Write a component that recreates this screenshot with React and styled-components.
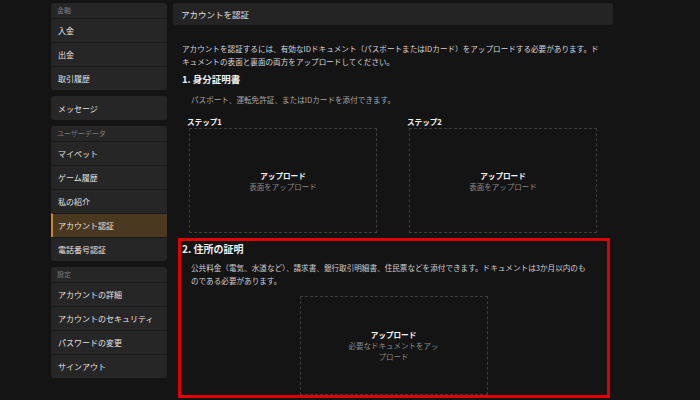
import React from "react";
import styled, { createGlobalStyle } from "styled-components";

const Global = createGlobalStyle`
  html, body { margin: 0; padding: 0; background: #141414; }
  body { font-family: "Noto Sans CJK JP", "Noto Sans", sans-serif; overflow: hidden; }
  * { box-sizing: border-box; }
`;

const Page = styled.div`
  display: flex;
  gap: 6px;
  padding: 3px 0 0 51px;
  height: 400px;
  overflow: hidden;
  background: #141414;
`;

const Sidebar = styled.nav`
  width: 116px;
  flex-shrink: 0;
  display: flex;
  flex-direction: column;
  gap: 6px;
`;

const Group = styled.div`
  background: #262626;
  border-radius: 3px;
  overflow: hidden;
  display: flex;
  flex-direction: column;
`;

const GroupTitle = styled.div`
  height: 15px;
  line-height: 15px;
  padding-left: 6px;
  font-size: 7px;
  color: #7c7c7c;
`;

const Item = styled.div`
  height: 24px;
  display: flex;
  align-items: center;
  padding-left: ${(p) => (p.$active ? "5px" : "7px")};
  border-top: 1px solid #1a1a1a;
  border-left: ${(p) => (p.$active ? "2px solid #c98a2e" : "none")};
  background: ${(p) => (p.$active ? "#4a3820" : "transparent")};
  font-size: 8px;
  color: #e4e4e4;
  ${(p) => p.$first && "border-top: none;"}
`;

const Main = styled.main`
  width: 440px;
  flex-shrink: 0;
  display: flex;
  flex-direction: column;
`;

const TitleBar = styled.div`
  height: 22px;
  background: #242424;
  border-radius: 3px;
  display: flex;
  align-items: center;
  padding-left: 8px;
  font-size: 8.5px;
  color: #e0e0e0;
`;

const Content = styled.div`
  padding: 0 3px 0 5px;
  display: flex;
  flex-direction: column;
`;

const Intro = styled.p`
  margin: 17px 0 0;
  padding: 0 5px 0 4px;
  font-size: 7.6px;
  line-height: 13px;
  color: #d6d6d6;
`;

const Heading = styled.h3`
  margin: ${(p) => p.$mt || "4px"} 0 0;
  padding-left: ${(p) => p.$pl || "4px"};
  font-size: ${(p) => p.$fs || "9.5px"};
  line-height: 14px;
  font-weight: 700;
  color: #f0f0f0;
`;

const Note = styled.p`
  margin: ${(p) => p.$mt || "7px"} 0 0;
  padding-left: ${(p) => p.$pl || "13px"};
  padding-right: ${(p) => p.$pr || "8px"};
  font-size: 7.6px;
  line-height: 13px;
  color: ${(p) => p.$color || "#a8a8a8"};
`;

const Steps = styled.div`
  display: grid;
  grid-template-columns: 188px 188px;
  column-gap: 32px;
  margin: 11px 0 0 11px;
`;

const Step = styled.div`
  display: flex;
  flex-direction: column;
`;

const StepLabel = styled.div`
  font-size: 7.6px;
  font-weight: 700;
  line-height: 10px;
  color: #f0f0f0;
  margin-left: -2px;
  margin-bottom: 1px;
`;

const Drop = styled.div`
  height: 105px;
  width: 188px;
  border: 1px dashed #3c3c3c;
  display: flex;
  flex-direction: column;
  align-items: center;
  justify-content: center;
  text-align: center;
  ${(p) => p.$center && "align-self: center; margin-top: 9px;"}
`;

const DropTitle = styled.div`
  font-size: 7.6px;
  font-weight: 700;
  line-height: 11px;
  color: #f4f4f4;
`;

const DropSub = styled.div`
  max-width: 94px;
  font-size: 7.5px;
  line-height: 11px;
  color: #8a8a8a;
`;

const Highlight = styled.section`
  margin-top: 5px;
  border: 3px solid #e00000;
  padding: 0 1px 0 0;
  display: flex;
  flex-direction: column;
  height: 160px;
  overflow: hidden;
`;

const groups = [
  { title: "金融", items: ["入金", "出金", "取引履歴"] },
  { items: ["メッセージ"] },
  {
    title: "ユーザーデータ",
    items: ["マイペット", "ゲーム履歴", "私の紹介", "アカウント認証", "電話番号認証"],
  },
  {
    title: "設定",
    items: ["アカウントの詳細", "アカウントのセキュリティ", "パスワードの変更", "サインアウト"],
  },
];

export default function App() {
  return (
    <>
      <Global />
      <Page>
        <Sidebar>
          {groups.map((g, gi) => (
            <Group key={gi}>
              {g.title && <GroupTitle>{g.title}</GroupTitle>}
              {g.items.map((it, i) => (
                <Item key={it} $first={!g.title && i === 0} $active={it === "アカウント認証"}>
                  {it}
                </Item>
              ))}
            </Group>
          ))}
        </Sidebar>
        <Main>
          <TitleBar>アカウントを認証</TitleBar>
          <Content>
            <Intro>
              アカウントを認証するには、有効なIDドキュメント（パスポートまたはIDカード）をアップロードする必要があります。ドキュメントの表面と裏面の両方をアップロードしてください。
            </Intro>
            <Heading>1. 身分証明書</Heading>
            <Note>パスポート、運転免許証、またはIDカードを添付できます。</Note>
            <Steps>
              {["ステップ1", "ステップ2"].map((s) => (
                <Step key={s}>
                  <StepLabel>{s}</StepLabel>
                  <Drop>
                    <DropTitle>アップロード</DropTitle>
                    <DropSub>表面をアップロード</DropSub>
                  </Drop>
                </Step>
              ))}
            </Steps>
            <Highlight>
              <Heading $mt="1px" $pl="1px" $fs="10px">2. 住所の証明</Heading>
              <Note $mt="5px" $color="#cfcfcf" $pl="10px" $pr="14px">
                公共料金（電気、水道など）、請求書、銀行取引明細書、住民票などを添付できます。ドキュメントは3か月以内のものである必要があります。
              </Note>
              <Drop $center>
                <DropTitle>アップロード</DropTitle>
                <DropSub>必要なドキュメントをアップロード</DropSub>
              </Drop>
            </Highlight>
          </Content>
        </Main>
      </Page>
    </>
  );
}
